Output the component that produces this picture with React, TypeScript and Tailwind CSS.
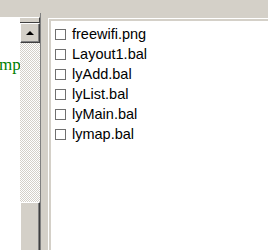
import React from 'react'

const files = ['freewifi.png', 'Layout1.bal', 'lyAdd.bal', 'lyList.bal', 'lyMain.bal', 'lymap.bal']

const App: React.FC = () => {
  return (
    <div className="w-[268px] h-[250px] bg-[#d4d0c8] flex flex-col overflow-hidden font-['Liberation_Sans',Arial,sans-serif]">
      <div className="flex flex-1 min-h-0">
        {/* editor pane, scrolled far right */}
        <div className="w-[20px] mt-[17px] bg-white overflow-hidden">
          <div className="pt-[38px] -ml-[1px] whitespace-nowrap text-[17px] leading-[20px] text-[#008000] font-['Liberation_Serif',serif]">
            mp:
          </div>
        </div>

        {/* vertical scrollbar */}
        <div className="w-[20px] mt-[17px] flex flex-col">
          <div className="h-[6px] bg-[#d4d0c8] border-t border-t-white border-b border-b-[#404040] border-r border-r-[#404040]" />
          <div className="h-[20px] bg-[#d4d0c8] border-t border-l border-white border-r border-b border-r-[#404040] border-b-[#404040] flex items-center justify-center shadow-[inset_-1px_-1px_0_#808080]">
            <div className="w-0 h-0 border-l-[4px] border-r-[4px] border-b-[4px] border-l-transparent border-r-transparent border-b-black" />
          </div>
          <div className="h-[159px] bg-[image:repeating-conic-gradient(#d4d0c8_0_25%,#ffffff_0_50%)] bg-[length:2px_2px]" />
          <div className="flex-1 bg-[#d4d0c8] border-t border-l border-t-white border-l-white border-r border-r-[#404040] shadow-[inset_-1px_0_0_#808080]" />
        </div>

        {/* splitter */}
        <div className="w-[8px] mt-[13px] border-l border-l-[#808080]" />

        {/* file list */}
        <div className="flex-1 mt-[18px] border-t border-l border-white bg-[#d4d0c8] pt-[2px] pl-[2px]">
          <div className="h-full bg-white pt-[3px] pl-[4px]">
            {files.map((f) => (
              <div key={f} className="h-[20px] flex items-center gap-[6px]">
                <span className="w-[11px] h-[11px] border border-[#707070] bg-white shrink-0" />
                <span className="text-[14.5px] leading-[16px] text-black whitespace-nowrap">{f}</span>
              </div>
            ))}
          </div>
        </div>
      </div>
    </div>
  )
}

export default App
